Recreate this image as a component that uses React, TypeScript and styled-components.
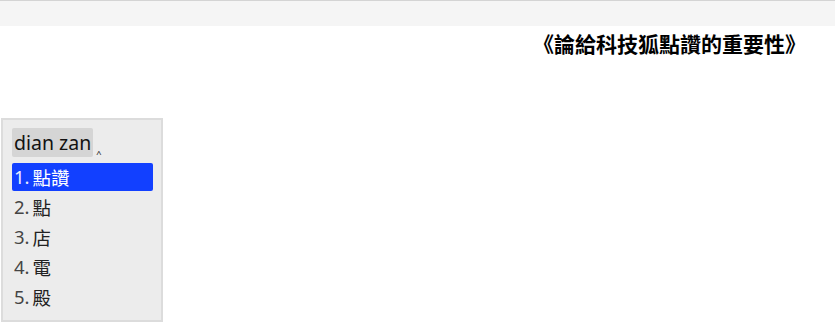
import React from "react";
import styled, { createGlobalStyle } from "styled-components";

const Global = createGlobalStyle`
  html, body { margin: 0; padding: 0; background: #ffffff; }
  body { font-family: "Noto Sans", "Noto Sans CJK TC", sans-serif; }
`;

const Page = styled.div`
  width: 835px;
  height: 334px;
  display: flex;
  flex-direction: column;
  overflow: hidden;
`;

const TopBar = styled.div`
  height: 25px;
  background: #f5f5f5;
  border-top: 1px solid #d4d4d4;
  flex: none;
`;

const Title = styled.h1`
  margin: 2px 0 0 0;
  height: 30px;
  line-height: 30px;
  padding-right: 29px;
  text-align: right;
  font-family: "Noto Sans CJK TC", sans-serif;
  font-weight: 700;
  font-size: 21px;
  color: #000;
  letter-spacing: 0;
`;

const Panel = styled.div`
  margin: 60px 0 0 1px;
  width: 141px;
  padding: 8px 8px 9px 9px;
  background: #ececec;
  border: 2px solid #dcdcdc;
  display: flex;
  flex-direction: column;
  gap: 6px;
`;

const InputRow = styled.div`
  display: flex;
  align-items: flex-end;
  gap: 3px;
`;

const Composition = styled.span`
  background: #d5d5d5;
  height: 29px;
  line-height: 29px;
  padding: 0 2px 0 2px;
  border-radius: 2px;
  font-size: 19.5px;
  color: #111;
  font-family: "Noto Sans", sans-serif;
`;

const Caret = styled.span`
  font-size: 13px;
  line-height: 13px;
  color: #333;
  margin-bottom: 3px;
`;

const List = styled.ol`
  list-style: none;
  margin: 0;
  padding: 0;
  display: flex;
  flex-direction: column;
  gap: 2px;
`;

const Item = styled.li<{ $active?: boolean }>`
  height: 28px;
  line-height: 28px;
  padding-left: 2px;
  border-radius: 2px;
  font-size: 18.5px;
  background: ${(p) => (p.$active ? "#1240ff" : "transparent")};
  color: ${(p) => (p.$active ? "#ffffff" : "#222")};
  display: flex;
  align-items: center;
`;

const Num = styled.span<{ $active?: boolean }>`
  font-family: "Noto Sans", sans-serif;
  color: ${(p) => (p.$active ? "#e8ecff" : "#444")};
  margin-right: 3px;
`;

const Word = styled.span`
  font-family: "Noto Sans CJK TC", sans-serif;
`;

const candidates = ["點讚", "點", "店", "電", "殿"];

export default function App() {
  return (
    <Page>
      <Global />
      <TopBar />
      <Title>《論給科技狐點讚的重要性》</Title>
      <Panel>
        <InputRow>
          <Composition>dian zan</Composition>
          <Caret>‸</Caret>
        </InputRow>
        <List>
          {candidates.map((c, i) => (
            <Item key={c} $active={i === 0}>
              <Num $active={i === 0}>{i + 1}.</Num>
              <Word>{c}</Word>
            </Item>
          ))}
        </List>
      </Panel>
    </Page>
  );
}
